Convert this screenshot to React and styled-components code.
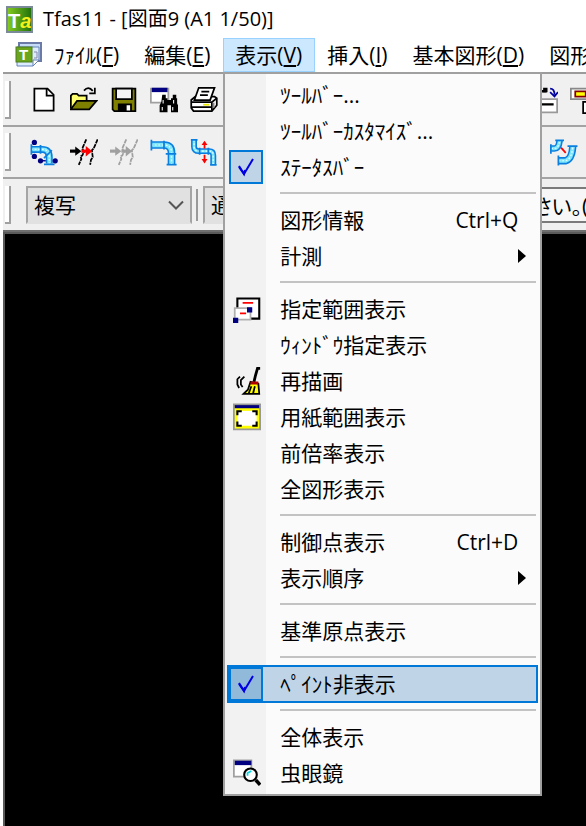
import React from "react";
import styled, { createGlobalStyle, css } from "styled-components";

const GlobalStyle = createGlobalStyle`
  *, *::before, *::after { box-sizing: border-box; }
  body {
    margin: 0;
    background: #fff;
    color: #000;
    font-family: "Open Sans", "Noto Sans CJK JP", sans-serif;
    font-size: 21px;
    line-height: 30px;
    overflow: hidden;
  }
  button, input, select { font: inherit; color: inherit; margin: 0; }
`;

const Window = styled.div`
  min-height: 100vh;
  display: flex;
  flex-direction: column;
`;

const TitleBar = styled.header`
  height: 38px;
  padding: 0 6px;
  display: flex;
  align-items: center;
  gap: 10px;
  white-space: nowrap;
`;

const Title = styled.h1`
  margin: 0;
  font-size: 20px;
  font-weight: 400;
  line-height: 30px;
`;

const MenuBar = styled.nav`
  height: 36px;
  margin-left: 3px;
  padding-left: 11px;
  display: flex;
  border-bottom: 2px solid #9b9b9b;
  white-space: nowrap;
`;

const DocIcon = styled.span`
  width: 28px;
  display: flex;
  align-items: center;
`;

const MenuAnchor = styled.div`
  position: relative;
  flex: none;
  display: flex;
`;

const MenuTitle = styled.button`
  flex: none;
  padding: 0 12px 0 11px;
  border: 1px solid ${(p) => (p.$open ? "#99d1ff" : "transparent")};
  background: ${(p) => (p.$open ? "#cce8ff" : "transparent")};
  line-height: 30px;
  u { text-underline-offset: 2px; text-decoration-thickness: 2px; }
`;

const Menu = styled.div`
  position: absolute;
  z-index: 2;
  top: 100%;
  left: 0;
  width: 319px;
  padding: 3px;
  border: 2px solid #a0a0a0;
  background: linear-gradient(to right, #f2f2f2 41px, #fbfbfb 41px);
`;

const itemLayout = css`
  width: 100%;
  height: 36px;
  padding: 0;
  display: grid;
  grid-template-columns: 38px 1fr auto;
  align-items: center;
  border: 0;
  background: transparent;
  text-align: left;
`;

const MenuItem = styled.button`
  ${itemLayout}
`;

const CheckItem = styled.label`
  ${itemLayout}
  ${(p) =>
    p.$active &&
    css`
      background: #bfd4e6;
      outline: 2px solid #0078d7;
      outline-offset: -1px;
    `}
`;

const IconCell = styled.span`
  display: flex;
  align-items: center;
  justify-content: center;
`;

const CheckCell = styled.span`
  display: grid;
  place-items: center;
  width: 34px;
  height: 34px;
  margin-left: 1px;
  border: 2px solid #0078d7;
  background: ${(p) => (p.$active ? "#91b9da" : "#bfd4e6")};
  > * { grid-area: 1 / 1; }
`;

const CheckInput = styled.input`
  appearance: none;
  width: 28px;
  height: 28px;
`;

const ItemText = styled.span`
  padding-left: 14px;
  white-space: nowrap;
`;

const Shortcut = styled.span`
  padding-right: 19px;
`;

const Arrow = styled.svg`
  margin-right: 11px;
`;

const Separator = styled.hr`
  height: 2px;
  margin: 7px 1px 8px 52px;
  border: 0;
  background: #c3c3c3;
`;

const ToolRow = styled.div`
  height: ${(p) => p.$height}px;
  margin-left: 3px;
  display: flex;
  align-items: center;
  overflow: hidden;
  background: #f0f0f0;
  border-bottom: 2px solid ${(p) => (p.$last ? "#6f6f6f" : "#a3a3a3")};
`;

const Grip = styled.span`
  flex: none;
  width: 6px;
  height: 38px;
  margin: 0 ${(p) => p.$space}px 0 2px;
  border: solid #a0a0a0;
  border-width: 0 2px 2px 0;
  background: #fff;
`;

const Tool = styled.button`
  flex: none;
  width: 40px;
  height: 40px;
  padding: 0;
  border: 0;
  background: transparent;
  display: grid;
  place-items: center;
`;

const ToolGap = styled.span`
  flex: none;
  width: ${(p) => p.$width}px;
`;

const Combo = styled.div`
  flex: none;
  display: grid;
  align-items: center;
  width: ${(p) => p.$width}px;
  > * { grid-area: 1 / 1; }
  svg { justify-self: end; margin-right: 8px; pointer-events: none; }
`;

const Select = styled.select`
  appearance: none;
  width: 100%;
  height: 38px;
  padding: 0 6px;
  border: 2px solid #a5a5a5;
  border-bottom-color: #e1e1e1;
  border-radius: 0;
  background: #e1e1e1;
`;

const Divider = styled.span`
  flex: none;
  width: 2px;
  height: 32px;
  margin: 0 5px 0 4px;
  background: #9a9a9a;
`;

const Prompt = styled.input`
  flex: none;
  width: 320px;
  height: 36px;
  padding: 0 10px;
  border: 2px solid #7a7a7a;
  background: #f7f7f7;
  font-feature-settings: "palt";
`;

const Canvas = styled.main`
  flex: 1;
  margin-left: 3px;
  border: solid #5a5a5a;
  border-width: 2px 0 0 2px;
  background: #000;
`;

const Icon = ({ size = 28, children, ...rest }) => (
  <svg width={size} height={size} viewBox="0 0 16 16" fill="none" stroke="#000" aria-hidden="true" {...rest}>
    {children}
  </svg>
);

const AppLogo = () => (
  <svg width="27" height="27" viewBox="0 0 27 27" aria-hidden="true">
    <defs>
      <linearGradient id="logo" x1="0" y1="0" x2="1" y2="0">
        <stop offset="0" stopColor="#86cc20" />
        <stop offset="1" stopColor="#1f6f0c" />
      </linearGradient>
    </defs>
    <rect x="1" y="1" width="25" height="25" fill="url(#logo)" stroke="#7a8a98" strokeWidth="2" />
    <text x="2" y="22" fontFamily="Liberation Sans" fontSize="20" fontWeight="700" fill="#fff">
      T<tspan fontStyle="italic" fill="#f4f01c">a</tspan>
    </text>
  </svg>
);

const DocLogo = () => (
  <svg width="28" height="26" viewBox="0 0 28 26" aria-hidden="true">
    <rect x="5" y="1" width="22" height="18" fill="#c4dcf8" stroke="#6b7aa6" strokeWidth="2" />
    <path d="M3 5H25V18L19 24H3Z" fill="#dcecff" stroke="#6482b8" />
    <path d="M25 18H19V24Z" fill="#fff" stroke="#6482b8" />
    <path d="M20 10h3v6h-3" fill="none" stroke="#88a" />
    <rect x="2" y="5" width="16" height="15" fill="#6aa51c" stroke="#4d7d20" />
    <text x="5" y="18" fontFamily="Liberation Sans" fontSize="15" fontWeight="700" fill="#fff">T</text>
  </svg>
);

const NewIcon = () => (
  <Icon>
    <path d="M2.5 1.5H10L13.5 5V14H2.5Z" fill="#fff" />
    <path d="M9.5 1.5V5.5H13.5" />
  </Icon>
);

const OpenIcon = () => (
  <Icon>
    <path d="M.5 13V5.5L1.5 4.5H4L5 5.5H9.5V8" fill="#ffff70" />
    <path d="M.5 13.3L4 8.5H15.2L11 13.3Z" fill="#808000" />
    <path d="M8 2.6Q10.5-.2 13 2.8M14.2 1V4.2H11" />
  </Icon>
);

const SaveIcon = () => (
  <Icon>
    <path d="M1.5 1.5H14.5V14.3H2.5L1.5 13.3Z" fill="#808000" />
    <path d="M3.5 1.5H12.5V7.5H3.5Z" fill="#f4f4f4" />
    <path d="M4.5 10H12.5V14.5H4.5Z" fill="#000" stroke="none" />
    <path d="M9.5 11H11.5V14H9.5Z" fill="#fff" stroke="none" />
  </Icon>
);

const FindIcon = () => (
  <Icon>
    <path d="M.5 1.5H10.5V9.5H.5Z" fill="#fff" stroke="#a0a0a0" />
    <path d="M1 1H10V3.5H1Z" fill="#000080" stroke="none" />
    <path d="M7 5H9V7H10V8H12V7H13V5H15V7H15.5V10L16 11V15H12V11H10V15H5.500V11L6.500 9Z" fill="#000" stroke="none" />
    <path d="M7.500 8V10M13.500 8V10M7 12V14M13 12V14" stroke="#fff" strokeWidth=".6" />
  </Icon>
);

const PrintIcon = () => (
  <Icon>
    <path d="M.7 8L3 6H14L15.300 7V11L12.500 14.300H2L.7 12.500Z" fill="#fff" />
    <path d="M5 1H14L11.500 8H2.500Z" fill="#fff" />
    <path d="M6.500 3.200H11M5.700 5.200H10.200M.7 9.200H12.500L15.300 7M12.500 9V14M1 12H12.500" />
    <path d="M13.500 9.500V12.500" stroke="#888" />
    <path d="M7.500 10.700H11" stroke="#e8e800" />
  </Icon>
);

const Pipe = ({ d, w = 3.6 }) => (
  <>
    <path d={d} stroke="#0a7fe0" strokeWidth={w} />
    <path d={d} stroke="#7fe6fa" strokeWidth={w - 1.8} />
    <path d={d} stroke="#e4ffff" strokeWidth=".7" strokeDasharray="1 1" />
  </>
);

const PipeNodesIcon = () => (
  <Icon>
    <Pipe d="M.7 6.500H7Q11 6.500 11 11V14.500" w={4} />
    <path d="M.8 3.500V9.500M6 4V9M8 15H14M8 11.500L12.500 7" stroke="#0a7fe0" />
    <g fill="#000080" stroke="none">
      <circle cx="2.500" cy="2.500" r="1.500" />
      <circle cx="2.500" cy="10.500" r="1.500" />
      <circle cx="6" cy="13" r="1.500" />
      <circle cx="14.400" cy="13" r="1.500" />
    </g>
    <path d="M6 13H9" stroke="#000080" strokeWidth=".8" />
  </Icon>
);

const BreakIcon = ({ color = "#000", accent = "#f00" }) => (
  <Icon stroke={color}>
    <path d="M9.300 .8L7 6L8 8L7 10L6 10.500L6.500 12L5 15.300M15.800 .8L13.500 6L12.500 7L13 11L12 12.500L11.500 15.300" strokeDasharray="2.500 .4" />
    <path d="M0 7.500H4" strokeWidth="1.800" />
    <path d="M3 4.800L6.500 7.500L3 10.200Z" fill={color} stroke="none" />
    <path d="M6.500 7.500H10" stroke={accent} strokeWidth="1.800" />
    <path d="M9 4.500L12.700 7.500L9 10.500Z" fill={accent} stroke="none" />
  </Icon>
);

const ElbowIcon = () => (
  <Icon>
    <Pipe d="M.8 4H8Q12.300 4 12.300 8.500V15" w={4.4} />
    <path d="M.8 1V7.200M8 1.500V6.500M9 9H15M9.500 15.200H15.200" stroke="#0a7fe0" />
  </Icon>
);

const OffsetIcon = () => (
  <Icon>
    <Pipe d="M2.300 1V5Q2.300 7.500 5 7.500H11Q13.300 7.500 13.300 10V15.300" w={3.4} />
    <path d="M.5 1H4.300M5.500 5.500V9.500M10.500 5.500V9.500M11.500 15.300H15.200" stroke="#0a7fe0" />
    <path d="M8.300 3V6M8.300 9.500V13" stroke="#f00" />
    <path d="M8.300 1.500L10 4H6.600ZM8.300 14.500L10 12H6.600Z" fill="#f00" stroke="none" />
  </Icon>
);

const JointIcon = () => (
  <Icon>
    <Pipe d="M.7 6H2.500Q5 6 5.500 1.300" w={3.8} />
    <Pipe d="M5 13H9Q12.500 12 13 5" w={4.2} />
    <path d="M.5 3.500V9M3 1.300H8M4.800 10V15.700M10 4.700H15.700" stroke="#0a7fe0" />
    <path d="M6.300 5.500L9 8.500" stroke="#f00" />
  </Icon>
);

const PageExportIcon = () => (
  <Icon>
    <path d="M3 7.500H15.500V15H3Z" fill="#fff" stroke="#999" />
    <path d="M4 3H9.500M5 10.500H13.500" strokeWidth="1.400" />
    <path d="M8 3H9.500V1.500H8Z" fill="#000" />
    <path d="M11.500 1.500Q14 1.500 14 5M11.500 3.500L14 6L16 3.500" stroke="#0000a0" />
  </Icon>
);

const BlocksIcon = () => (
  <Icon>
    <path d="M.5 1.500H16V7.500H.5Z" fill="#fff" stroke="#888" />
    <path d="M3 3H9V6H3Z" fill="#ffff00" stroke="#800000" />
    <path d="M7.500 9H16V15.500H7.500Z" fill="#fff" />
    <path d="M10 11H12" stroke="#c00000" />
  </Icon>
);

const RangeIcon = () => (
  <Icon>
    <path d="M2.500 2H15V13.500H2.500Z" fill="#fff" strokeWidth="1.200" />
    <path d="M5.500 4.500H11.500" stroke="#f00" />
    <path d="M1 7.500H10V14H1Z" fill="#fff" stroke="#b0b0b0" />
    <path d="M4 10.500H7.500" stroke="#f00" />
    <path d="M8 7H11V10H8ZM0 13H3V16H0Z" fill="#000080" stroke="none" />
  </Icon>
);

const BroomIcon = () => (
  <Icon>
    <path d="M15.500 .8H14L12.800 5L12 8.500" strokeWidth="1.600" />
    <path d="M10 8.500L14.500 9.500L15 15.300H6L8.500 13Z" fill="#ffff00" />
    <path d="M10 8.300H14.500V10H10Z" fill="#b00000" stroke="none" />
    <path d="M10.500 11L9 15M12.500 11L11.500 15" />
    <path d="M4 5.500L2.500 7V10L3.500 12M6.500 5.500L4.500 7.500V10L5.500 11.500" />
  </Icon>
);

const PaperIcon = () => (
  <Icon>
    <path d="M.5 .8H15.500V15H.5Z" fill="#ffff00" stroke="#999" />
    <path d="M1 1.200H15V3H1Z" fill="#000080" stroke="none" />
    <path d="M2.500 4.500H13.500V13H2.500Z" fill="#fff" stroke="none" />
    <path d="M2.500 7V4.700H5M11 4.700H13.500V7M13.500 10.500V13H11M5 13H2.500V10.500" strokeWidth="1.200" />
  </Icon>
);

const LensIcon = () => (
  <Icon>
    <path d="M.5 .8H10.500V10H.5Z" fill="#fff" stroke="#a0a0a0" />
    <path d="M1 1H10.500V3.500H1Z" fill="#000080" stroke="none" />
    <circle cx="10" cy="9" r="3.600" fill="#fff" strokeWidth="1.200" />
    <path d="M8.300 9.500V8L10.500 6.800" stroke="#00d8e8" />
    <path d="M13 12L15.500 14.800" strokeWidth="2" />
  </Icon>
);

const CheckMark = () => (
  <svg width="20" height="22" viewBox="0 0 20 22" fill="none" aria-hidden="true">
    <path d="M3 11L8 18L17 3" stroke="#0000e0" strokeWidth="2" />
    <path d="M3 10L8 18L9 14" stroke="#0000e0" strokeWidth="2" />
  </svg>
);

const Chevron = () => (
  <svg width="16" height="10" viewBox="0 0 16 10" fill="none" aria-hidden="true">
    <path d="M1 1.500L8 8.500L15 1.500" stroke="#555" strokeWidth="2" />
  </svg>
);

const menuGroups = [
  [{ text: "ﾂｰﾙﾊﾞｰ..." }, { text: "ﾂｰﾙﾊﾞｰｶｽﾀﾏｲｽﾞ..." }, { text: "ｽﾃｰﾀｽﾊﾞｰ", checked: true }],
  [{ text: "図形情報", shortcut: "Ctrl+Q" }, { text: "計測", submenu: true }],
  [
    { text: "指定範囲表示", icon: RangeIcon },
    { text: "ｳｨﾝﾄﾞｳ指定表示" },
    { text: "再描画", icon: BroomIcon },
    { text: "用紙範囲表示", icon: PaperIcon },
    { text: "前倍率表示" },
    { text: "全図形表示" },
  ],
  [{ text: "制御点表示", shortcut: "Ctrl+D" }, { text: "表示順序", submenu: true }],
  [{ text: "基準原点表示" }],
  [{ text: "ﾍﾟｲﾝﾄ非表示", checked: true, active: true }],
  [{ text: "全体表示" }, { text: "虫眼鏡", icon: LensIcon }],
];

function MenuEntry({ text, icon: EntryIcon, shortcut, submenu, checked, active }) {
  if (checked) {
    return (
      <CheckItem $active={active}>
        <CheckCell $active={active}>
          <CheckInput type="checkbox" defaultChecked />
          <CheckMark />
        </CheckCell>
        <ItemText>{text}</ItemText>
      </CheckItem>
    );
  }
  return (
    <MenuItem type="button">
      <IconCell>{EntryIcon && <EntryIcon />}</IconCell>
      <ItemText>{text}</ItemText>
      {shortcut && <Shortcut>{shortcut}</Shortcut>}
      {submenu && (
        <Arrow width="8" height="14" viewBox="0 0 8 14" aria-hidden="true">
          <path d="M0 0L8 7L0 14Z" />
        </Arrow>
      )}
    </MenuItem>
  );
}

function ViewMenu() {
  return (
    <Menu>
      {menuGroups.map((group, index) => (
        <React.Fragment key={index}>
          {index > 0 && <Separator />}
          {group.map((entry) => (
            <MenuEntry key={entry.text} {...entry} />
          ))}
        </React.Fragment>
      ))}
    </Menu>
  );
}

const BarEntry = ({ label, hotkey, open }) => (
  <MenuTitle type="button" $open={open}>
    {label}
    {hotkey && <>(<u>{hotkey}</u>)</>}
  </MenuTitle>
);

const ToolButton = ({ label, children }) => (
  <Tool type="button" aria-label={label}>{children}</Tool>
);

export default function App() {
  return (
    <>
      <GlobalStyle />
      <Window>
        <TitleBar>
          <AppLogo />
          <Title>Tfas11 - [図面9 (A1 1/50)]</Title>
        </TitleBar>
        <MenuBar>
          <DocIcon><DocLogo /></DocIcon>
          <BarEntry label="ﾌｧｲﾙ" hotkey="F" />
          <BarEntry label="編集" hotkey="E" />
          <MenuAnchor>
            <BarEntry label="表示" hotkey="V" open />
            <ViewMenu />
          </MenuAnchor>
          <BarEntry label="挿入" hotkey="I" />
          <BarEntry label="基本図形" hotkey="D" />
          <BarEntry label="図形" />
        </MenuBar>
        <ToolRow $height={53}>
          <Grip $space={13} />
          <ToolButton label="新規"><NewIcon /></ToolButton>
          <ToolButton label="開く"><OpenIcon /></ToolButton>
          <ToolButton label="保存"><SaveIcon /></ToolButton>
          <ToolButton label="検索"><FindIcon /></ToolButton>
          <ToolButton label="印刷"><PrintIcon /></ToolButton>
          <ToolGap $width={300} />
          <ToolButton label="出力"><PageExportIcon /></ToolButton>
          <ToolButton label="部品"><BlocksIcon /></ToolButton>
        </ToolRow>
        <ToolRow $height={52}>
          <Grip $space={13} />
          <ToolButton label="節点"><PipeNodesIcon /></ToolButton>
          <ToolButton label="切断"><BreakIcon /></ToolButton>
          <ToolButton label="切断解除"><BreakIcon color="#a0a0a0" accent="#a0a0a0" /></ToolButton>
          <ToolButton label="エルボ"><ElbowIcon /></ToolButton>
          <ToolButton label="段差"><OffsetIcon /></ToolButton>
          <ToolGap $width={320} />
          <ToolButton label="接続"><JointIcon /></ToolButton>
        </ToolRow>
        <ToolRow $height={53} $last>
          <Grip $space={15} />
          <Combo $width={166}>
            <Select aria-label="作図方法" defaultValue="複写">
              <option>複写</option>
            </Select>
            <Chevron />
          </Combo>
          <Divider />
          <Combo $width={300}>
            <Select aria-label="種別" defaultValue="通">
              <option>通</option>
            </Select>
          </Combo>
          <ToolGap $width={18} />
          <Prompt aria-label="案内" readOnly value="さい。(" />
        </ToolRow>
        <Canvas aria-label="図面" />
      </Window>
    </>
  );
}
